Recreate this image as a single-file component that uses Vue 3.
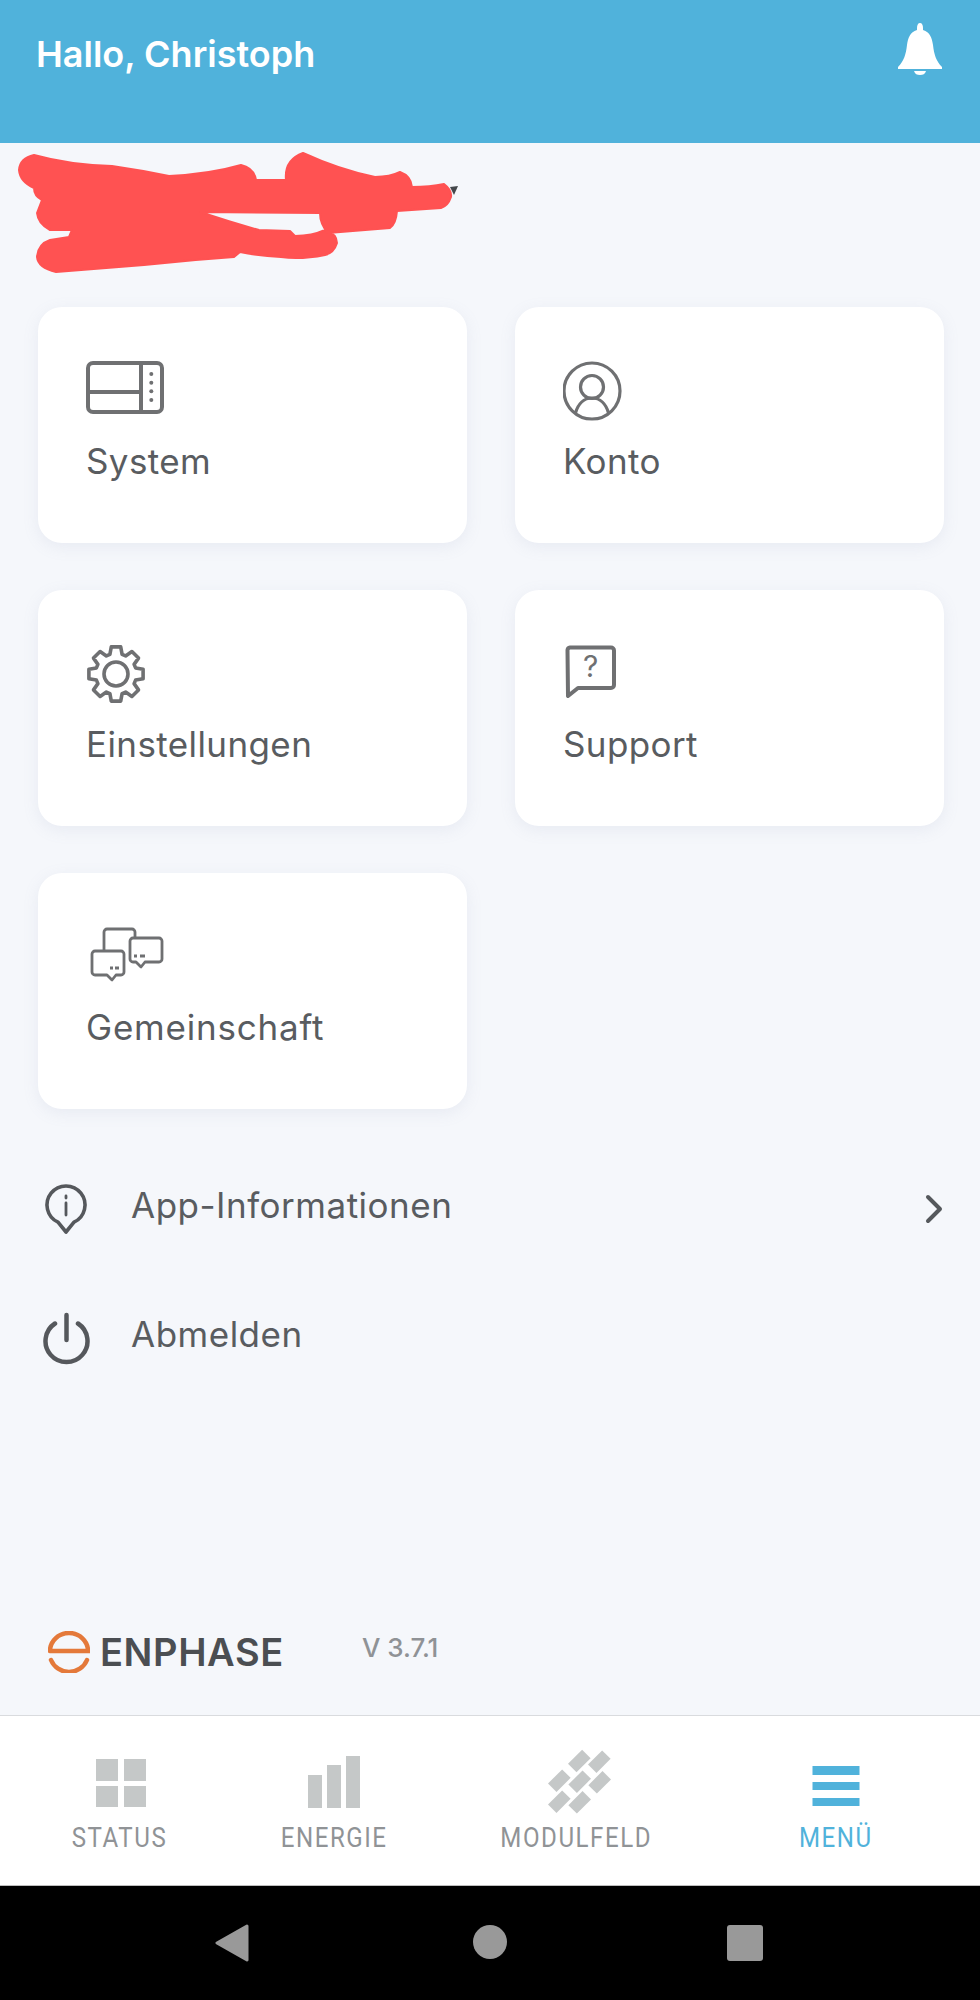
<script setup>
const bricks = [
  [35.3, 11],
  [55.3, 11.7],
  [15.3, 30.7],
  [35.7, 31.7],
  [55.7, 32.3],
  [15.3, 51.7],
  [35.7, 52.3]
]

// 8 tooth gear, one tooth pointing straight up
function gearPath(cx, cy, outer, root) {
  const pts = []
  for (let i = 0; i < 8; i++) {
    const a = (i * Math.PI) / 4 - Math.PI / 2
    const steps = [
      [-0.3, root],
      [-0.17, outer],
      [0.17, outer],
      [0.3, root]
    ]
    for (const [d, r] of steps) {
      pts.push(`${(cx + r * Math.cos(a + d)).toFixed(1)} ${(cy + r * Math.sin(a + d)).toFixed(1)}`)
    }
  }
  return 'M' + pts.join(' L') + ' Z'
}

const gear = gearPath(30, 34, 27.5, 20.5)
</script>

<template>
  <div class="screen">
    <header class="top-bar">
      <h1 class="greeting">Hallo, Christoph</h1>
      <svg class="bell" viewBox="0 0 44 52" aria-hidden="true">
        <path d="M22 0c2 0 3 2 3 5v2c7 2 9 8 10 15 1 9 3 16 9 22v2H0v-2c6-6 8-13 9-22 1-7 3-13 10-15V5c0-3 1-5 3-5z" fill="#fff" />
        <path d="M16 48h12c-1 3-3 4-6 4s-5-1-6-4z" fill="#fff" />
      </svg>
    </header>

    <main class="content">
      <div class="site">
        <svg class="scribble" viewBox="0 0 460 125" aria-hidden="true">
          <path d="M450 37l8 -1 -4 9z" fill="#44474b" />
          <path
            class="scribble-ink"
            d="M19 20 Q20 8 34 5 Q70 15 112 16 Q140 20 169 26 Q210 24 241 15 Q254 18 256 30 H286 Q284 10 303 3 Q340 20 375 27 Q390 27 400 22 Q411 26 412 37 Q430 37 444 34 Q452 40 451 47 Q448 56 441 58 L397 61 Q396 74 390 78 L328 83 Q320 74 320 63 L200 62 Q230 72 259 80 L290 81 L295 86 Q312 86 325 80 Q337 84 337 93 Q334 103 325 105 Q300 110 281 107 Q260 106 240 102 L234 107 Q190 110 144 115 L56 122 Q38 118 37 107 Q38 94 50 90 L69 87 L72 80 L50 80 Q38 74 37 63 L42 50 Q34 46 34 38 Q20 32 19 20 Z"
          />
        </svg>
      </div>

      <section class="cards">
        <a class="card">
          <svg class="card-icon" viewBox="0 0 80 64" aria-hidden="true">
            <rect x="2" y="6" width="74" height="49" rx="5" />
            <path d="M55 6v49M2 35h53" />
            <g class="dots">
              <circle cx="65.3" cy="17" r="2" />
              <circle cx="65.3" cy="25.7" r="2" />
              <circle cx="65.3" cy="34.3" r="2" />
              <circle cx="65.3" cy="43" r="2" />
            </g>
          </svg>
          <span class="card-label">System</span>
        </a>

        <a class="card">
          <svg class="card-icon thin" viewBox="0 0 80 64" aria-hidden="true">
            <circle cx="29" cy="34" r="28" />
            <circle cx="29" cy="30" r="11.500" />
            <path d="M12.500 56C15 47 21 41 29 41S43 47 45.500 56" />
          </svg>
          <span class="card-label">Konto</span>
        </a>

        <a class="card">
          <svg class="card-icon gear" viewBox="0 0 80 64" aria-hidden="true">
            <path :d="gear" />
            <circle cx="30" cy="34" r="12" />
          </svg>
          <span class="card-label">Einstellungen</span>
        </a>

        <a class="card">
          <svg class="card-icon" viewBox="0 0 80 64" aria-hidden="true">
            <path d="M7 7.500H48a3 3 0 0 1 3 3V45a3 3 0 0 1-3 3H15L5 56L4.500 10a3 3 0 0 1 2.500-2.500Z" />
            <text x="20" y="37" class="icon-q">?</text>
          </svg>
          <span class="card-label">Support</span>
        </a>

        <a class="card">
          <svg class="card-icon chat" viewBox="0 0 80 64" aria-hidden="true">
            <path d="M18 27V9a3 3 0 0 1 3-3H46a3 3 0 0 1 3 3V14" />
            <path d="M9 28H35a3 3 0 0 1 3 3V49a3 3 0 0 1-3 3H30L26 57L21 52H9a3 3 0 0 1-3-3V31a3 3 0 0 1 3-3Z" />
            <path d="M47 15H73a3 3 0 0 1 3 3V36a3 3 0 0 1-3 3H59L55 44L50 39H47a3 3 0 0 1-3-3V18a3 3 0 0 1 3-3Z" />
            <path d="M24 45h3M29 45h4M48 33h3M54 33h5" />
          </svg>
          <span class="card-label card-label--wide">Gemeinschaft</span>
        </a>
      </section>

      <section class="links">
        <a class="link">
          <svg class="link-icon" viewBox="0 0 48 56" aria-hidden="true">
            <path d="M32 42.200A19 19 0 1 0 16 42.200L24 52Z" />
            <path class="fine" d="M24 23V35M24 16v2" />
          </svg>
          <span class="link-label">App-Informationen</span>
          <svg class="chevron" viewBox="0 0 18 30" aria-hidden="true">
            <path d="M3 3L15 15L3 27" />
          </svg>
        </a>
        <a class="link">
          <svg class="link-icon power" viewBox="0 0 48 56" aria-hidden="true">
            <path d="M13 13.500A21 21 0 1 0 36 13.500" />
            <path d="M24.500 5V30" />
          </svg>
          <span class="link-label link-label--up">Abmelden</span>
        </a>
      </section>

      <footer class="brand">
        <svg class="logo" viewBox="0 0 42 42" aria-hidden="true">
          <path d="M2 20A19 18 0 0 1 40 20H2" />
          <path d="M3 29A19.500 19.500 0 0 0 39 29" />
        </svg>
        <span class="wordmark">ENPHASE</span>
        <span class="version">V 3.7.1</span>
      </footer>
    </main>

    <nav class="tabs">
      <a class="tab">
        <svg class="tab-icon" viewBox="0 0 64 64" aria-hidden="true">
          <rect x="8" y="9" width="22" height="22" />
          <rect x="36" y="9" width="22" height="22" />
          <rect x="8" y="36" width="22" height="21" />
          <rect x="36" y="36" width="22" height="21" />
        </svg>
        <span class="tab-label">STATUS</span>
      </a>
      <a class="tab">
        <svg class="tab-icon" viewBox="0 0 64 64" aria-hidden="true">
          <rect x="6" y="25" width="14" height="33" />
          <rect x="25" y="15" width="14" height="43" />
          <rect x="44" y="6" width="14" height="52" />
        </svg>
        <span class="tab-label">ENERGIE</span>
      </a>
      <a class="tab">
        <svg class="tab-icon" viewBox="0 0 64 64" aria-hidden="true">
          <rect
            v-for="(b, i) in bricks"
            :key="i"
            :x="b[0] - 10"
            :y="b[1] - 6"
            width="20"
            height="12"
            :transform="`rotate(-45 ${b[0]} ${b[1]})`"
          />
        </svg>
        <span class="tab-label">MODULFELD</span>
      </a>
      <a class="tab tab--active">
        <svg class="tab-icon" viewBox="0 0 64 64" aria-hidden="true">
          <rect x="8.500" y="16" width="47" height="9" />
          <rect x="8.500" y="32" width="47" height="8" />
          <rect x="8.500" y="48" width="47" height="8" />
        </svg>
        <span class="tab-label">MENÜ</span>
      </a>
    </nav>

    <div class="system-nav">
      <svg class="nav-back" viewBox="0 0 34 38" aria-hidden="true">
        <path d="M32 2L2 19L32 36Z" />
      </svg>
      <span class="nav-home"></span>
      <span class="nav-recent"></span>
    </div>
  </div>
</template>

<style scoped>
.screen {
  display: flex;
  flex-direction: column;
  width: 980px;
  height: 2000px;
  overflow: hidden;
  background: #f5f7fb;
  font-family: Inter, 'Noto Sans', sans-serif;
  color: #595c60;
}

.top-bar {
  display: flex;
  justify-content: space-between;
  align-items: flex-start;
  height: 143px;
  padding: 23px 38px 0 36px;
  box-sizing: border-box;
  background: #50b2db;
}

.greeting {
  margin: 9px 0 0;
  color: #fff;
  font-size: 36px;
  line-height: 44px;
  font-weight: 600;
}

.bell {
  width: 44px;
  height: 52px;
}

.content {
  display: flex;
  flex: 1;
  flex-direction: column;
  min-height: 0;
}

.site {
  height: 164px;
  padding: 7px 0 0;
  box-sizing: border-box;
}

.scribble {
  display: block;
  width: 460px;
  height: 125px;
}

.scribble-ink {
  fill: #ff5252;
  stroke: #ff5252;
  stroke-width: 2;
  stroke-linejoin: round;
}

.cards {
  display: grid;
  grid-template-columns: 429px 429px;
  gap: 47px 48px;
  padding: 0 37px 0 38px;
}

.card {
  display: flex;
  flex-direction: column;
  height: 236px;
  padding: 50px 48px 0;
  box-sizing: border-box;
  border-radius: 24px;
  background: #fff;
  box-shadow: 0 4px 16px rgba(140, 150, 185, 0.12);
}

.card-icon {
  width: 80px;
  height: 64px;
  fill: none;
  stroke: #6f7072;
  stroke-width: 4;
  stroke-linejoin: round;
}

.card-icon.thin {
  stroke-width: 3.2;
}

.card-icon.gear {
  stroke-width: 3.600;
}

.card-icon.chat {
  stroke-width: 2.800;
}

.dots {
  fill: #6f7072;
  stroke: none;
}

.icon-q {
  fill: #6f7072;
  stroke: none;
  font-size: 30px;
}

.card-label {
  margin-top: 18px;
  font-size: 35px;
  line-height: 44px;
  letter-spacing: 0.4px;
}

.card-label--wide {
  letter-spacing: 0.8px;
}

.links {
  display: flex;
  flex-direction: column;
  padding: 71px 0 0 42px;
}

.link {
  display: flex;
  align-items: flex-start;
  height: 130px;
}

.link-icon {
  flex: none;
  width: 48px;
  height: 56px;
  fill: none;
  stroke: #55585c;
  stroke-width: 3.600;
  stroke-linecap: round;
  stroke-linejoin: round;
}

.link-icon.power {
  stroke-width: 4.500;
}

.link-icon .fine {
  stroke-width: 2.800;
}

.link-label {
  margin: 3px 0 0 41px;
  font-size: 35px;
  line-height: 44px;
  letter-spacing: 0.5px;
}

.link-label--up {
  margin-top: 2px;
}

.chevron {
  width: 18px;
  height: 30px;
  margin: 14px 37px 0 auto;
  fill: none;
  stroke: #55585c;
  stroke-width: 4;
  stroke-linecap: round;
  stroke-linejoin: round;
}

.brand {
  display: flex;
  align-items: center;
  margin-top: auto;
  height: 42px;
  margin-bottom: 42px;
  padding-left: 48px;
}

.logo {
  flex: none;
  width: 42px;
  height: 42px;
  fill: none;
  stroke: #e4793a;
  stroke-width: 4.500;
  stroke-linecap: round;
}

.wordmark {
  margin-left: 10px;
  color: #4b4e52;
  font-size: 38px;
  line-height: 42px;
  font-weight: 600;
  letter-spacing: 0.6px;
}

.version {
  margin: -10px 0 0 78px;
  color: #8f9296;
  font-size: 26px;
  font-weight: 500;
}

.tabs {
  display: grid;
  flex: none;
  grid-template-columns: 240px 188px 296px 224px;
  height: 171px;
  padding-right: 32px;
  box-sizing: border-box;
  border-top: 1px solid #d9dbde;
  border-bottom: 1px solid #bdbdbd;
  background: #fff;
}

.tab {
  display: flex;
  flex-direction: column;
  align-items: center;
  padding-top: 34px;
  color: #909396;
  font-family: Roboto, sans-serif;
  font-size: 28px;
  font-weight: 400;
  line-height: 32px;
  letter-spacing: 1.800px;
}

.tab-label {
  margin-top: 1px;
  transform: scaleX(0.86);
  white-space: nowrap;
}

.tab-icon {
  width: 64px;
  height: 64px;
  margin-bottom: 7px;
  overflow: visible;
  fill: #c5c8c8;
}

.tab--active {
  color: #50b2db;
}

.tab--active .tab-icon {
  fill: #50b2db;
}

.system-nav {
  position: relative;
  flex: none;
  height: 114px;
  background: #000;
}

.nav-back {
  position: absolute;
  left: 215px;
  top: 38px;
  width: 34px;
  height: 38px;
  fill: #999;
  stroke: #999;
  stroke-width: 3;
  stroke-linejoin: round;
}

.nav-home {
  position: absolute;
  left: 473px;
  top: 39px;
  width: 34px;
  height: 34px;
  border-radius: 50%;
  background: #999;
}

.nav-recent {
  position: absolute;
  left: 727px;
  top: 39px;
  width: 36px;
  height: 36px;
  border-radius: 3px;
  background: #999;
}
</style>
